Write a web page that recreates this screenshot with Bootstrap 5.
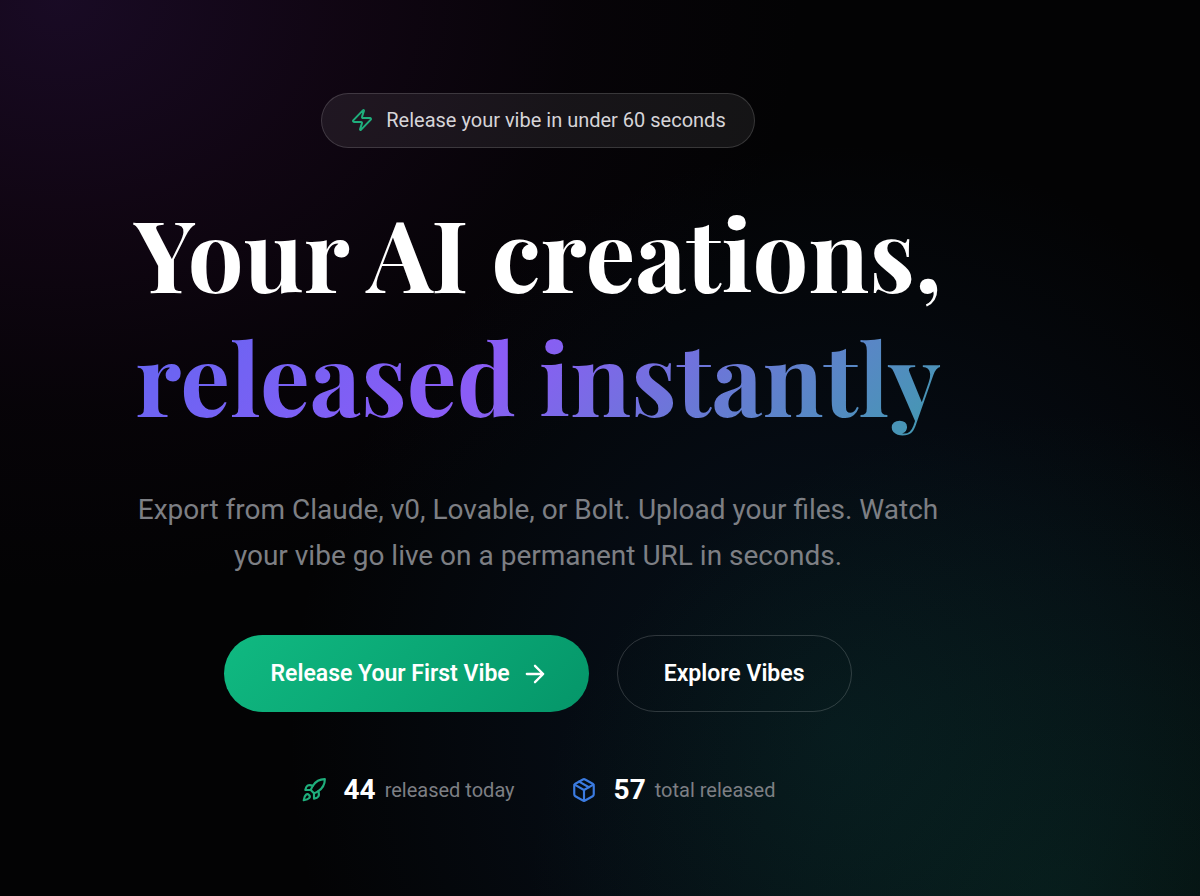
<!DOCTYPE html>
<html lang="en">
<head>
<meta charset="utf-8">
<meta name="viewport" content="width=device-width, initial-scale=1">
<title>Release your vibe</title>
<link href="https://cdn.jsdelivr.net/npm/bootstrap@5.3.0/dist/css/bootstrap.min.css" rel="stylesheet">
<style>
  body {
    font-family: Roboto, "Liberation Sans", sans-serif;
    color: #fff;
    background-color: #030304;
    background-image:
      radial-gradient(ellipse 62% 66% at 5% 0%, rgba(88, 32, 130, .26), rgba(80, 18, 90, .17) 38%, rgba(60, 10, 65, .06) 70%, transparent),
      radial-gradient(ellipse 44% 54% at 88% 100%, rgba(16, 110, 70, .18), rgba(16, 100, 65, .12) 45%, transparent),
      radial-gradient(ellipse 46% 66% at 70% 82%, rgba(20, 85, 115, .2), rgba(20, 65, 115, .13) 50%, transparent);
  }
  .hero { padding: 93px 124px 80px 0; }
  .hero-pill {
    padding: 0 28px 2px; height: 55px; gap: 12px;
    border: 1px solid rgba(255, 255, 255, .15);
    background: rgba(255, 255, 255, .07);
    color: #d6d4d8; font-size: 20px;
  }
  .hero-title {
    margin: 42px 0 49px;
    font: 700 99px/124px "Playfair Display", "Liberation Serif", serif;
  }
  .title-gradient {
    color: transparent;
    background: linear-gradient(135deg, #6366f1, #8b5cf6 45%, #4696b4 96%);
    -webkit-background-clip: text; background-clip: text;
  }
  .hero-copy { max-width: 860px; font-size: 28px; line-height: 46px; color: #7d7f84; margin-bottom: 56px; }
  .hero-btn { --bs-btn-font-size: 23px; --bs-btn-font-weight: 600; --bs-btn-color: #fff; --bs-btn-hover-color: #fff;
    height: 77px; padding: 0 46px; line-height: 28px; }
  .btn-release { border: 0; gap: 11px; padding-right: 40px; background: linear-gradient(135deg, #10b981, #059669); }
  .btn-explore { border: 1px solid rgba(255, 255, 255, .17); }
  .btn-row { gap: 28px; }
  .stats-row { margin-top: 58px; gap: 56px; font-size: 20px; line-height: 40px; color: #7d7f84; }
  .stat-number { font-size: 28px; font-weight: 700; color: #fff; margin: 0 9px 0 17px; }
  .line-icon { fill: none; stroke: currentColor; stroke-width: 2; stroke-linecap: round; stroke-linejoin: round; flex: none; }
  .tint-green { color: #1fae7c; }
  .tint-blue { color: #3b7be0; }
</style>
</head>
<body class="min-vh-100">
<main class="hero d-flex flex-column align-items-center text-center">
  <div class="hero-pill d-inline-flex align-items-center rounded-pill">
    <svg class="line-icon tint-green" width="24" height="24" viewBox="0 0 24 24" aria-hidden="true"><path d="M4 14a1 1 0 0 1-.78-1.63l9.9-10.2a.5.5 0 0 1 .86.46l-1.92 6.02A1 1 0 0 0 13 10h7a1 1 0 0 1 .78 1.63l-9.9 10.2a.5.5 0 0 1-.86-.46l1.92-6.02A1 1 0 0 0 11 14z"/></svg>
    <span>Release your vibe in under 60 seconds</span>
  </div>
  <h1 class="hero-title">Your AI creations,<br><span class="title-gradient d-inline-block">released instantly</span></h1>
  <p class="hero-copy">Export from Claude, v0, Lovable, or Bolt. Upload your files. Watch your vibe go live on a permanent URL in seconds.</p>
  <div class="btn-row d-flex flex-wrap justify-content-center">
    <button type="button" class="btn hero-btn btn-release rounded-pill d-inline-flex align-items-center">
      Release Your First Vibe
      <svg class="line-icon" width="28" height="28" viewBox="0 0 24 24" aria-hidden="true"><path d="M5 12h14M12 5l7 7-7 7"/></svg>
    </button>
    <button type="button" class="btn hero-btn btn-explore rounded-pill">Explore Vibes</button>
  </div>
  <div class="stats-row d-flex flex-wrap justify-content-center">
    <div class="d-flex align-items-center">
      <svg class="line-icon tint-green" width="26" height="26" viewBox="0 0 24 24" aria-hidden="true"><path d="M4.5 16.5c-1.5 1.26-2 5-2 5s3.74-.5 5-2c.71-.84.7-2.13-.09-2.91a2.18 2.18 0 0 0-2.91-.09z"/><path d="m12 15-3-3a22 22 0 0 1 2-3.95A12.88 12.88 0 0 1 22 2c0 2.72-.78 7.5-6 11a22.35 22.35 0 0 1-4 2z"/><path d="M9 12H4s.55-3.03 2-4c1.62-1.08 5 0 5 0"/><path d="M12 15v5s3.03-.55 4-2c1.08-1.62 0-5 0-5"/></svg>
      <span class="stat-number">44</span><span>released today</span>
    </div>
    <div class="d-flex align-items-center">
      <svg class="line-icon tint-blue" width="26" height="26" viewBox="0 0 24 24" aria-hidden="true"><path d="M11 21.73a2 2 0 0 0 2 0l7-4A2 2 0 0 0 21 16V8a2 2 0 0 0-1-1.73l-7-4a2 2 0 0 0-2 0l-7 4A2 2 0 0 0 3 8v8a2 2 0 0 0 1 1.73z"/><path d="M12 22V12"/><path d="M3.3 7 12 12l8.7-5"/><path d="m7.5 4.27 9 5.15"/></svg>
      <span class="stat-number">57</span><span>total released</span>
    </div>
  </div>
</main>
<script src="https://cdn.jsdelivr.net/npm/bootstrap@5.3.0/dist/js/bootstrap.bundle.min.js"></script>
</body>
</html>
